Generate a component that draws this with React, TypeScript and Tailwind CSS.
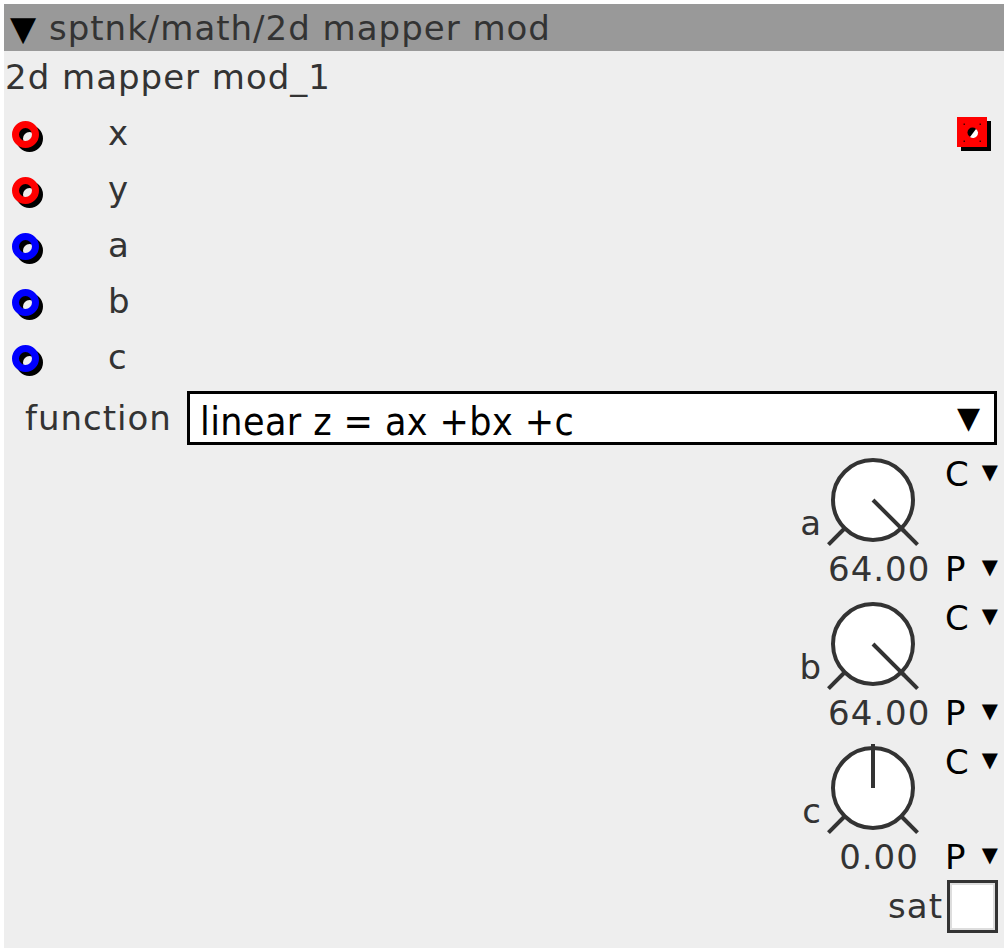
import React from "react";

function Inlet({ color }: { color: string }) {
  return (
    <svg width="36" height="36" viewBox="0 0 36 36" className="block">
      <circle cx="17.5" cy="17.5" r="10" fill="none" stroke="#000" strokeWidth="7" />
      <circle cx="13.5" cy="13.5" r="10" fill="none" stroke={color} strokeWidth="7" />
    </svg>
  );
}

function Outlet() {
  return (
    <svg width="34" height="34" viewBox="0 0 34 34" className="block">
      <rect x="4" y="4" width="30" height="30" fill="#000" />
      <rect x="0" y="0" width="30" height="30" fill="#ff0000" />
      <circle cx="15.5" cy="15.5" r="5" fill="#000" />
      <path d="M 19 12 A 5 5 0 0 1 13 20 Z" fill="#fff" />
      <rect x="6.5" y="6.5" width="1.5" height="1.5" fill="#400" />
      <rect x="22.5" y="6.5" width="1.5" height="1.5" fill="#400" />
      <rect x="6.5" y="23.5" width="1.5" height="1.5" fill="#400" />
      <rect x="22.5" y="23.5" width="1.5" height="1.5" fill="#400" />
    </svg>
  );
}

function Knob({ angle }: { angle: number }) {
  const cx = 50;
  const cy = 46;
  const rad = (angle * Math.PI) / 180;
  const ix = cx + 44 * Math.sin(rad);
  const iy = cy - 44 * Math.cos(rad);
  const d = 0.7071;
  return (
    <svg width="100" height="96" viewBox="0 0 100 96" className="block">
      <line x1={cx - 41 * d} y1={cy + 41 * d} x2={cx - 63 * d} y2={cy + 63 * d} stroke="#333" strokeWidth="4" />
      <line x1={cx + 41 * d} y1={cy + 41 * d} x2={cx + 63 * d} y2={cy + 63 * d} stroke="#333" strokeWidth="4" />
      <circle cx={cx} cy={cy} r="40" fill="#fff" stroke="#333" strokeWidth="4" />
      <line x1={cx} y1={cy} x2={ix} y2={iy} stroke="#333" strokeWidth="4" />
    </svg>
  );
}

function KnobBlock({ label, value, angle }: { label: string; value: string; angle: number }) {
  return (
    <div className="flex justify-end pr-[6px] h-[144px]">
      <div className="mt-[54px] h-[38px] leading-[38px] text-[#333]">{label}</div>
      <div className="flex flex-col w-[108px] pt-[4px]">
        <div className="pl-[1px]">
          <Knob angle={angle} />
        </div>
        <div className="pl-[6px] h-[38px] leading-[38px] text-center text-[#333]">{value}</div>
      </div>
      <div className="ml-[15px] w-[53px] flex flex-col pt-[5px] text-black">
        <div className="h-[38px] leading-[38px] flex items-start justify-between">
          <span>C</span>
          <span className="text-[21px] leading-[34px] tracking-normal">▼</span>
        </div>
        <div className="mt-[57px] h-[38px] leading-[38px] flex items-start justify-between">
          <span>P</span>
          <span className="text-[21px] leading-[34px] tracking-normal">▼</span>
        </div>
      </div>
    </div>
  );
}

export default function App() {
  const inlets: { label: string; color: string }[] = [
    { label: "x", color: "#ff0000" },
    { label: "y", color: "#ff0000" },
    { label: "a", color: "#0000ff" },
    { label: "b", color: "#0000ff" },
    { label: "c", color: "#0000ff" },
  ];
  return (
    <div className="w-[1008px] h-[952px] bg-white p-[4px] font-['DejaVu_Sans',sans-serif] text-[34px] tracking-[1px]">
      <div className="w-[1000px] h-[944px] bg-[#eeeeee] flex flex-col">
        <div className="h-[47px] bg-[#999999] flex items-center pl-[6px] text-[#333]">
          <span className="leading-[38px]">
            <span className="text-black">▼</span> sptnk/math/2d mapper mod
          </span>
        </div>
        <div className="mt-[7px] pl-[1px] h-[47px] leading-[38px] text-[#333]">2d mapper mod_1</div>
        {inlets.map((inl, i) => (
          <div key={inl.label} className="h-[56px] flex items-start">
            <div className="ml-[8px] mt-[16px]">
              <Inlet color={inl.color} />
            </div>
            <div className="ml-[60px] mt-[9px] h-[38px] leading-[38px] text-[#333] flex-1">{inl.label}</div>
            {i === 0 && (
              <div className="mt-[12px] mr-[13px]">
                <Outlet />
              </div>
            )}
          </div>
        ))}
        <div className="mt-[6px] flex items-center">
          <div className="ml-[21px] w-[162px] h-[38px] leading-[38px] text-[#333]">function</div>
          <div className="w-[810px] h-[54px] border-[3px] border-black bg-white flex items-center pl-[10px] pr-[14px] text-black">
            <span className="flex-1 mt-[8px] font-['DejaVu_Sans_Condensed','DejaVu_Sans',sans-serif] [font-stretch:condensed] text-[39px] tracking-[0.4px] leading-[44px]">
              linear z = ax +bx +c
            </span>
            <span className="text-[30px] tracking-normal leading-[44px]">▼</span>
          </div>
        </div>
        <div className="mt-[5px] flex flex-col">
          <KnobBlock label="a" value="64.00" angle={135} />
          <KnobBlock label="b" value="64.00" angle={135} />
          <KnobBlock label="c" value="0.00" angle={0} />
          <div className="-mt-[2px] flex justify-end items-start pr-[6px]">
            <div className="mt-[7px] mr-[4px] h-[38px] leading-[38px] text-[#333]">sat</div>
            <div className="w-[51px] h-[53px] border-[3px] border-[#333] bg-white shadow-[inset_0_0_0_2px_#dddddd]" />
          </div>
        </div>
      </div>
    </div>
  );
}
